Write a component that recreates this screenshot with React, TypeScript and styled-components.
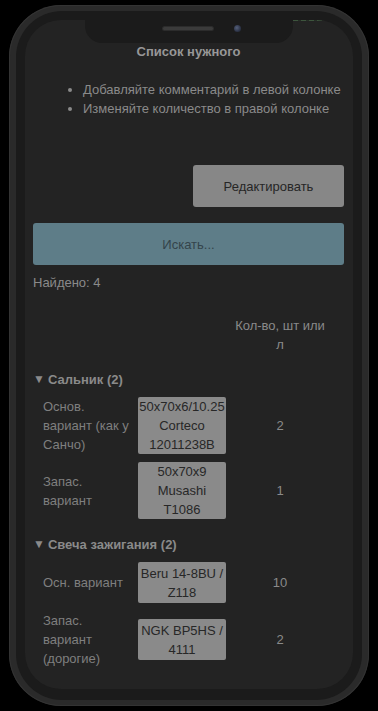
import React from 'react';
import styled, { createGlobalStyle } from 'styled-components';

const GlobalStyle = createGlobalStyle`
  html, body {
    margin: 0;
    padding: 0;
    background: #000;
    font-family: "Liberation Sans", Arial, sans-serif;
  }
`;

const Stage = styled.div`
  width: 378px;
  height: 711px;
  padding: 5px 0 0 9px;
  box-sizing: border-box;
  background: #000;
`;

const PhoneShell = styled.div`
  width: 360px;
  height: 701px;
  box-sizing: border-box;
  padding: 6px 7px;
  border-radius: 52px;
  background: #2a2a2a;
  box-shadow: inset 0 0 0 1px #333;
`;

const Bezel = styled.div`
  height: 100%;
  box-sizing: border-box;
  padding: 9px 9px 11px;
  border-radius: 46px;
  background: #1b1b1b;
`;

const Screen = styled.div`
  position: relative;
  height: 100%;
  box-sizing: border-box;
  padding: 24px 9px 0 8px;
  border-radius: 36px;
  background: #232323;
  overflow: hidden;
  color: #8a8a8a;
  font-size: 13px;
`;

const Notch = styled.div`
  position: absolute;
  top: 0;
  left: 60px;
  width: 208px;
  height: 23px;
  background: #1b1b1b;
  border-radius: 0 0 17px 17px;
`;

const Speaker = styled.span`
  position: absolute;
  top: 7px;
  left: 78px;
  width: 50px;
  height: 3px;
  border-radius: 2px;
  background: #3b3b3b;
  box-shadow: 0 0 0 1px #2c2c2c;
`;

const Camera = styled.span`
  position: absolute;
  top: 5px;
  left: 149px;
  width: 7px;
  height: 7px;
  border-radius: 50%;
  background: radial-gradient(circle at 40% 40%, #55607a 0, #2d3448 60%, #22262f 100%);
`;

const StatusGlow = styled.span`
  position: absolute;
  top: 0;
  right: 26px;
  width: 34px;
  height: 1px;
  background: repeating-linear-gradient(90deg, #3d553d 0 5px, #262f26 5px 8px);
`;

const Title = styled.h1`
  margin: 0;
  font-size: 13px;
  line-height: 16px;
  font-weight: bold;
  text-align: center;
  color: #979797;
`;

const Hints = styled.ul`
  margin: 20px 0 0;
  padding-left: 50px;
  line-height: 19px;
  color: #8a8a8a;
`;

const Actions = styled.div`
  margin-top: 47px;
  display: flex;
  flex-direction: column;
  align-items: flex-end;
  gap: 16px;
`;

const Button = styled.button<{ $wide?: boolean }>`
  width: ${({ $wide }) => ($wide ? '100%' : '151px')};
  height: 42px;
  border: 0;
  border-radius: 3px;
  font-family: inherit;
  font-size: 13px;
  background: ${({ $wide }) => ($wide ? '#5e7d88' : '#878787')};
  color: ${({ $wide }) => ($wide ? '#34444b' : '#262626')};
`;

const Found = styled.div`
  margin-top: 8px;
  line-height: 19px;
`;

const Row = styled.div<{ $head?: boolean }>`
  display: grid;
  grid-template-columns: 105px 88px 108px;
  align-items: center;
  line-height: 19px;
  margin-top: ${({ $head }) => ($head ? '24px' : '8px')};
`;

const Label = styled.div`
  padding: 0 8px 0 10px;
  color: #7f7f7f;
`;

const Part = styled.div`
  min-height: 41px;
  padding: 0 2px;
  display: flex;
  align-items: center;
  justify-content: center;
  text-align: center;
  border-radius: 2px;
  background: #8a8a8a;
  color: #272727;
`;

const Qty = styled.div`
  padding: 0 8px;
  text-align: center;
  color: #8a8a8a;
`;

const Group = styled.div`
  margin-top: 16px;
  line-height: 19px;
  font-weight: bold;
  color: #8a8a8a;
  display: flex;
  align-items: center;
  gap: 3px;
`;

const Caret = styled.span`
  font-size: 12px;
  font-weight: normal;
`;

type Item = { label: string; part: string; qty: number };

const groups: { name: string; items: Item[] }[] = [
  {
    name: 'Сальник (2)',
    items: [
      { label: 'Основ. вариант (как у Санчо)', part: '50x70x6/10.25 Corteco 12011238B', qty: 2 },
      { label: 'Запас. вариант', part: '50x70x9 Musashi T1086', qty: 1 },
    ],
  },
  {
    name: 'Свеча зажигания (2)',
    items: [
      { label: 'Осн. вариант', part: 'Beru 14-8BU / Z118', qty: 10 },
      { label: 'Запас. вариант (дорогие)', part: 'NGK BP5HS / 4111', qty: 2 },
    ],
  },
];

export default function App() {
  return (
    <>
      <GlobalStyle />
      <Stage>
        <PhoneShell>
          <Bezel>
            <Screen>
              <Notch>
                <Speaker />
                <Camera />
              </Notch>
              <StatusGlow />
              <Title>Список нужного</Title>
              <Hints>
                <li>Добавляйте комментарий в левой колонке</li>
                <li>Изменяйте количество в правой колонке</li>
              </Hints>
              <Actions>
                <Button>Редактировать</Button>
                <Button $wide>Искать...</Button>
              </Actions>
              <Found>Найдено: 4</Found>
              <Row $head>
                <div />
                <div />
                <Qty>Кол-во, шт или л</Qty>
              </Row>
              {groups.map((g) => (
                <React.Fragment key={g.name}>
                  <Group>
                    <Caret>▼</Caret>
                    {g.name}
                  </Group>
                  {g.items.map((it) => (
                    <Row key={it.label}>
                      <Label>{it.label}</Label>
                      <Part>{it.part}</Part>
                      <Qty>{it.qty}</Qty>
                    </Row>
                  ))}
                </React.Fragment>
              ))}
            </Screen>
          </Bezel>
        </PhoneShell>
      </Stage>
    </>
  );
}
